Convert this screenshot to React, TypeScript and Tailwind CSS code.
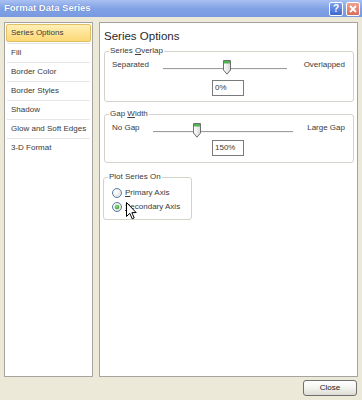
import React from "react";

const NAV_ITEMS = [
  "Series Options",
  "Fill",
  "Border Color",
  "Border Styles",
  "Shadow",
  "Glow and Soft Edges",
  "3-D Format",
];

const Thumb = () => (
  <svg width="8" height="15" viewBox="0 0 8 15" className="block">
    <defs>
      <linearGradient id="tb" x1="0" y1="0" x2="1" y2="0">
        <stop offset="0" stopColor="#ffffff" />
        <stop offset="1" stopColor="#d9d9d9" />
      </linearGradient>
    </defs>
    <path d="M0.5 0.5 H7.5 V10 L4 14.2 L0.5 10 Z" fill="url(#tb)" stroke="#6f6f6f" strokeWidth="1" />
    <rect x="1" y="1" width="6" height="2.5" fill="#4fb34f" />
  </svg>
);

interface SliderRowProps {
  left: string;
  right: string;
  leftW: string;
  trackW: string;
  rightW: string;
  thumbLeft: number;
}

const SliderRow = ({ left, right, leftW, trackW, rightW, thumbLeft }: SliderRowProps) => {
  return (
    <div className="flex h-[15px] pl-[7px] pr-[8px]">
      <div className={`${leftW} pt-px leading-[10px]`}>{left}</div>
      <div className={`${trackW} relative`}>
        <div className="absolute left-0 right-0 top-[9px] h-px bg-[#9d9d9d]" />
        <div className="absolute left-0 right-0 top-[10px] h-px bg-[#f4f4f4]" />
        <div className="absolute top-px" style={{ left: thumbLeft }}>
          <Thumb />
        </div>
      </div>
      <div className={`${rightW} pt-px text-right leading-[10px]`}>{right}</div>
    </div>
  );
};

const ValueBox = ({ value }: { value: string }) => (
  <div className="ml-[107px] w-[32px] h-[16px] border border-[#7b7b7b] bg-white pl-[2px] leading-[14px]">
    {value}
  </div>
);

const Radio = ({ checked }: { checked?: boolean }) => (
  <svg width="10" height="10" viewBox="0 0 10 10" className="block">
    <defs>
      <radialGradient id="rg" cx="0.35" cy="0.35" r="0.8">
        <stop offset="0" stopColor="#ffffff" />
        <stop offset="1" stopColor="#dcdcdc" />
      </radialGradient>
      <radialGradient id="gd" cx="0.4" cy="0.4" r="0.7">
        <stop offset="0" stopColor="#8fe07a" />
        <stop offset="1" stopColor="#2f9a2f" />
      </radialGradient>
    </defs>
    <circle cx="5" cy="5" r="4.5" fill="url(#rg)" stroke="#5a7da4" strokeWidth="1" />
    {checked && <circle cx="5" cy="5" r="2.3" fill="url(#gd)" />}
  </svg>
);

export default function App() {
  return (
    <div
      className="w-[362px] h-[400px] bg-[#ece9d8] flex flex-col text-[8px] text-[#3a3a3a] relative overflow-hidden"
      style={{ fontFamily: '"Liberation Sans", Arial, sans-serif' }}
    >
      {/* title bar */}
      <div className="h-[17px] flex items-center justify-between pl-[4px] pr-[2px] bg-gradient-to-b from-[#a9c1f1] via-[#83a2e6] to-[#7899e0]">
        <span className="text-white font-bold text-[9.5px] [text-shadow:0_0_1px_#3a5ab0]">
          Format Data Series
        </span>
        <div className="flex gap-[3px]">
          <div className="w-[14px] h-[14px] rounded-[2px] border border-white bg-gradient-to-b from-[#7ea2ec] to-[#3f68cf] text-white font-bold text-[10px] leading-[12px] text-center">
            ?
          </div>
          <div className="w-[14px] h-[14px] rounded-[2px] border border-white bg-gradient-to-b from-[#f0a292] to-[#d86c5a] flex items-center justify-center">
            <svg width="8" height="8" viewBox="0 0 8 8">
              <path d="M1 1 L7 7 M7 1 L1 7" stroke="#fff" strokeWidth="1.8" />
            </svg>
          </div>
        </div>
      </div>

      <div className="flex gap-[6px] px-[4px] pt-[5px] h-[360px]">
        {/* nav list */}
        <div className="w-[89px] bg-white border border-[#a5a4a0] pt-px">
          {NAV_ITEMS.map((item, i) =>
            i === 0 ? (
              <div key={item} className="h-[19px] px-px">
                <div className="h-[18px] rounded-[2px] border border-[#e2bf62] bg-gradient-to-b from-[#fff0b5] to-[#fdd874] pl-[4px] leading-[16px]">
                  {item}
                </div>
              </div>
            ) : (
              <div key={item} className="h-[19px] mx-[2px] border-t border-[#e6e6e6] pl-[4px] leading-[18px]">
                {item}
              </div>
            )
          )}
        </div>

        {/* options panel */}
        <div className="w-[259px] bg-white border border-[#a5a4a0] pl-[4px] pr-[3px] pt-[6px]">
          <div className="text-[11.5px] leading-[14px] text-[#2a2a2a]">Series Options</div>

          <fieldset className="mt-[3px] border border-[#d3d3cb] rounded-[3px] px-0 pb-[5px]">
            <legend className="ml-[4px] px-[1px] leading-[10px]">
              Series <span className="underline">O</span>verlap
            </legend>
            <div className="pt-[3px]">
              <SliderRow
                left="Separated"
                right="Overlapped"
                leftW="w-[51px]"
                trackW="w-[124px]"
                rightW="w-[58px]"
                thumbLeft={60}
              />
            </div>
            <div className="mt-[6px]">
              <ValueBox value="0%" />
            </div>
          </fieldset>

          <fieldset className="mt-[7px] border border-[#d3d3cb] rounded-[3px] px-0 pb-[6px]">
            <legend className="ml-[4px] px-[1px] leading-[10px]">
              Gap <span className="underline">W</span>idth
            </legend>
            <div className="pt-[3px]">
              <SliderRow
                left="No Gap"
                right="Large Gap"
                leftW="w-[41px]"
                trackW="w-[140px]"
                rightW="w-[52px]"
                thumbLeft={40}
              />
            </div>
            <div className="mt-[3px]">
              <ValueBox value="150%" />
            </div>
          </fieldset>

          <fieldset className="mt-[9px] -ml-px w-[89px] border border-[#d3d3cb] rounded-[3px] pl-[8px] pb-[7px]">
            <legend className="ml-[-4px] px-[1px] leading-[10px]">Plot Series On</legend>
            <div className="flex items-center gap-[3px] h-[10px] mt-[6px]">
              <Radio />
              <span>
                <span className="underline">P</span>rimary Axis
              </span>
            </div>
            <div className="flex items-center gap-[3px] h-[10px] mt-[4px]">
              <Radio checked />
              <span>
                <span className="underline">S</span>econdary Axis
              </span>
            </div>
          </fieldset>
        </div>
      </div>

      <div className="flex justify-end pr-[5px] pt-[3px]">
        <button className="w-[54px] h-[16px] rounded-[3px] border border-[#6f6f6f] bg-gradient-to-b from-white via-[#f3f3ef] to-[#dcdcd4] text-[8px] leading-[14px] text-[#222]">
          Close
        </button>
      </div>

      {/* mouse cursor */}
      <svg className="absolute left-[126px] top-[202px]" width="11" height="18" viewBox="0 0 11 18">
        <path
          d="M0.5 0.5 V14.5 L3.8 11.3 L6.2 16.8 L8.2 15.9 L5.9 10.6 L10.2 10.6 Z"
          fill="#fff"
          stroke="#000"
          strokeWidth="1"
          strokeLinejoin="miter"
        />
      </svg>
    </div>
  );
}
